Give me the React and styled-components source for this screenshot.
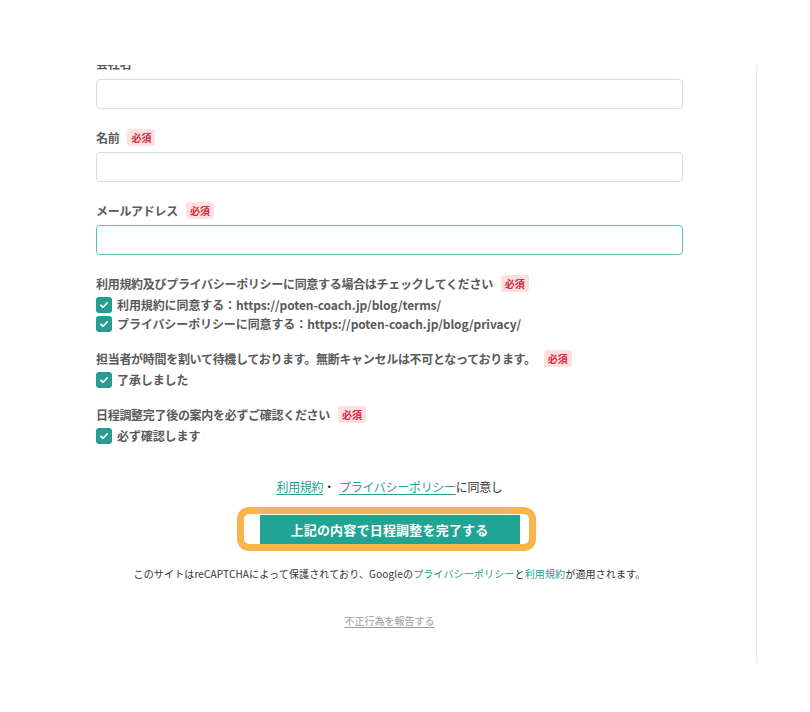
import React, { useLayoutEffect, useRef } from "react";
import styled, { createGlobalStyle } from "styled-components";

const GlobalStyle = createGlobalStyle`
  html, body {
    margin: 0;
    padding: 0;
    background: #fff;
  }
  body {
    font-family: "Noto Sans CJK JP", "Noto Sans", sans-serif;
    color: #333;
  }
`;

const Page = styled.div`
  padding-top: 65px;
  height: 712px;
  box-sizing: border-box;
`;

const Panel = styled.div`
  width: 757px;
  height: 598px;
  box-sizing: border-box;
  border-right: 1px solid #ebebeb;
  overflow: hidden;
`;

const Form = styled.form`
  width: 587px;
  margin-left: 96px;
  padding: 24px 0 40px;
  display: flex;
  flex-direction: column;
`;

const Field = styled.div`
  display: flex;
  flex-direction: column;
  gap: ${(p) => p.$gap || 6}px;
  margin-bottom: 19px;
`;

const Label = styled.div`
  display: flex;
  align-items: center;
  height: 18px;
  font-size: 12px;
  font-weight: 700;
  letter-spacing: -0.3px;
  color: #5a5a5a;
  white-space: nowrap;
`;

const Badge = styled.span`
  margin-left: 8px;
  padding: 2px 4px;
  border-radius: 3px;
  background: #fde1e1;
  color: #d22a3f;
  font-size: 10px;
  line-height: 13px;
  font-weight: 700;
  letter-spacing: 0;
`;

const Input = styled.input`
  height: 30px;
  width: 100%;
  box-sizing: border-box;
  border-radius: 4px;
  border: 1px solid ${(p) => (p.$focus ? "#5dbfb2" : "#d8dde0")};
  outline: none;
  padding: 0 10px;
  font-size: 13px;
  font-family: inherit;
`;

const Group = styled.div`
  display: flex;
  flex-direction: column;
  margin-bottom: 16px;
`;

const Options = styled.div`
  display: flex;
  flex-direction: column;
  margin-top: 3px;
`;

const Check = styled.label`
  display: flex;
  align-items: center;
  gap: 5px;
  height: 19px;
  font-size: 12px;
  font-weight: 700;
  letter-spacing: -0.1px;
  color: #5a5a5a;
  white-space: nowrap;
`;

const Box = styled.span`
  width: 16px;
  height: 16px;
  border-radius: 3px;
  background: #279c8f;
  display: flex;
  align-items: center;
  justify-content: center;
  flex-shrink: 0;
`;

const Agree = styled.p`
  margin: 18px 0 0;
  text-align: center;
  font-size: 12px;
  line-height: 16px;
  letter-spacing: -0.3px;
  color: #333;
`;

const Link = styled.a`
  color: ${(p) => (p.$muted ? "#9a9a9a" : "#279c8f")};
  text-decoration: ${(p) => (p.$plain ? "none" : "underline")};
  text-underline-offset: 2px;
`;

const Dot = styled.span`
  margin: 0 4px 0 0;
`;

const Ring = styled.div`
  align-self: center;
  margin: 12px 7px 0 0;
  display: flex;
  border: 7px solid #f7b54b;
  border-radius: 12px;
  background: #fff;
  padding: 1px 9px 0 16px;
`;

const Submit = styled.button`
  width: 260px;
  height: 29px;
  border: none;
  background: #22a494;
  color: #fff;
  font-family: inherit;
  font-size: 13px;
  font-weight: 700;
  letter-spacing: 0.2px;
`;

const Notice = styled.p`
  margin: 16px 0 0;
  text-align: center;
  font-size: 10px;
  line-height: 14px;
  letter-spacing: 0.15px;
  color: #333;
  white-space: nowrap;
`;

const Report = styled.p`
  margin: 33px 0 0;
  text-align: center;
  font-size: 10px;
  line-height: 14px;
`;

const CheckIcon = () => (
  <svg width="10" height="10" viewBox="0 0 10 10" fill="none">
    <path d="M1.8 5.2 L4 7.3 L8.3 2.8" stroke="#fff" strokeWidth="1.6" strokeLinecap="round" strokeLinejoin="round" />
  </svg>
);

const Option = ({ children }) => (
  <Check>
    <Box>
      <CheckIcon />
    </Box>
    {children}
  </Check>
);

export default function App() {
  const panel = useRef(null);

  useLayoutEffect(() => {
    if (panel.current) panel.current.scrollTop = 35;
  }, []);

  return (
    <>
      <GlobalStyle />
      <Page>
        <Panel ref={panel}>
          <Form onSubmit={(e) => e.preventDefault()}>
            <Field $gap={7}>
              <Label>会社名</Label>
              <Input />
            </Field>
            <Field>
              <Label>
                名前<Badge>必須</Badge>
              </Label>
              <Input />
            </Field>
            <Field>
              <Label>
                メールアドレス<Badge>必須</Badge>
              </Label>
              <Input $focus />
            </Field>

            <Group>
              <Label>
                利用規約及びプライバシーポリシーに同意する場合はチェックしてください<Badge>必須</Badge>
              </Label>
              <Options>
                <Option>利用規約に同意する：https://poten-coach.jp/blog/terms/</Option>
                <Option>プライバシーポリシーに同意する：https://poten-coach.jp/blog/privacy/</Option>
              </Options>
            </Group>

            <Group>
              <Label>
                担当者が時間を割いて待機しております。無断キャンセルは不可となっております。<Badge>必須</Badge>
              </Label>
              <Options>
                <Option>了承しました</Option>
              </Options>
            </Group>

            <Group>
              <Label>
                日程調整完了後の案内を必ずご確認ください<Badge>必須</Badge>
              </Label>
              <Options>
                <Option>必ず確認します</Option>
              </Options>
            </Group>

            <Agree>
              <Link href="#">利用規約</Link>
              <Dot>・</Dot>
              <Link href="#">プライバシーポリシー</Link>に同意し
            </Agree>

            <Ring>
              <Submit type="submit">上記の内容で日程調整を完了する</Submit>
            </Ring>

            <Notice>
              このサイトはreCAPTCHAによって保護されており、Googleの
              <Link href="#" $plain>プライバシーポリシー</Link>と
              <Link href="#" $plain>利用規約</Link>が適用されます。
            </Notice>

            <Report>
              <Link href="#" $muted>不正行為を報告する</Link>
            </Report>
          </Form>
        </Panel>
      </Page>
    </>
  );
}
